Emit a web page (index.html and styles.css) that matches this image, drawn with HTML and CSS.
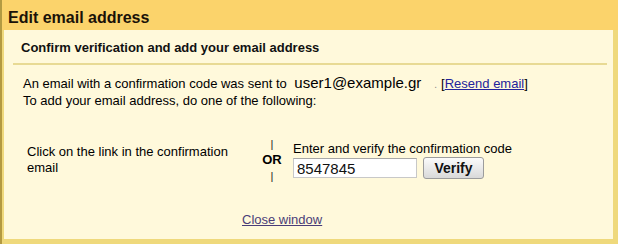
FILE: index.html
```html
<!DOCTYPE html>
<html lang="en">
<head>
<meta charset="UTF-8">
<title>Edit email address</title>
<link rel="stylesheet" href="styles.css">
</head>
<body>
    <div class="dialog">
        <div class="dialogTitle">Edit email address</div>

        <div class="panel">
            <div class="panelTitle">Confirm verification and add your email address</div>
            <div class="separator"></div>

            <div class="intro">
                An email with a confirmation code was sent to <span class="email">user1@example.gr</span><span class="dot">.</span>[<a class="resendLink" href="#">Resend email</a>]<br>
                To add your email address, do one of the following:
            </div>

            <div class="options">
                <div class="optionLink">Click on the link in the confirmation email</div>
                <div class="optionOr"><span class="pipe">|</span><br><b>OR</b><br><span class="pipe">|</span></div>
                <div class="optionCode">
                    <div>Enter and verify the confirmation code</div>
                    <div class="codeRow">
                        <input class="codeInput" type="text" value="8547845">
                        <button class="verifyButton">Verify</button>
                    </div>
                </div>
            </div>

            <div class="closeRow"><a class="closeLink" href="#">Close window</a></div>
        </div>
    </div>
</body>
</html>
```

FILE: styles.css
```css
body {
    margin: 0;
    font-family: "Liberation Sans", Arial, sans-serif;
    font-size: 13px;
    line-height: 16px;
    color: #000;
}

.dialog {
    width: 618px;
    height: 244px;
    box-sizing: border-box;
    background-color: #efd97c;
    border-left: 2px solid #b39a42;
    overflow: hidden;
}

.dialogTitle {
    height: 30px;
    box-sizing: border-box;
    padding: 8px 0 0 6px;
    font-size: 16px;
    line-height: 19px;
    font-weight: bold;
    color: #1a1208;
    background-color: #fbd36b;
}

.panel {
    height: 209px;
    box-sizing: border-box;
    margin: 0 5px 0 2px;
    padding-top: 10px;
    background-color: #fff9db;
}

.panelTitle {
    padding-left: 17px;
    font-weight: bold;
    color: #111;
}

.separator {
    height: 2px;
    margin: 7px 6px 0 9px;
    background-color: #e8da94;
}

.intro {
    margin-top: 10px;
    padding-left: 19px;
    white-space: nowrap;
}

.email {
    margin-left: 4px;
    font-size: 15px;
    line-height: 16px;
}

.dot {
    margin: 0 4px 0 13px;
    font-size: 10px;
    color: #888;
}

.resendLink {
    color: #23239c;
}

.options {
    display: flex;
    align-items: center;
    margin: 27px 0 0 23px;
}

.optionLink {
    width: 228px;
}

.optionOr {
    width: 34px;
    text-align: center;
}

.pipe {
    font-size: 11px;
    color: #222;
}

.optionCode {
    padding-left: 4px;
}

.codeRow {
    display: flex;
    align-items: center;
    height: 22px;
}

.codeInput {
    width: 124px;
    height: 20px;
    box-sizing: border-box;
    margin: 0;
    padding: 0 3px;
    border: 1px solid #c8c8c8;
    border-top-color: #a8a8a8;
    background: #fff;
    font-family: "Liberation Sans", Arial, sans-serif;
    font-size: 15px;
    color: #111;
}

.verifyButton {
    width: 61px;
    height: 22px;
    margin: 0 0 0 6px;
    padding: 0;
    border: 1px solid #9c9c9c;
    border-radius: 3px;
    background: linear-gradient(#fbfbfb, #d9d9d9);
    font-family: "Liberation Sans", Arial, sans-serif;
    font-size: 14px;
    font-weight: bold;
    color: #111;
}

.closeRow {
    margin: 28px 0 0 238px;
}

.closeLink {
    color: #4a3d78;
}
```
